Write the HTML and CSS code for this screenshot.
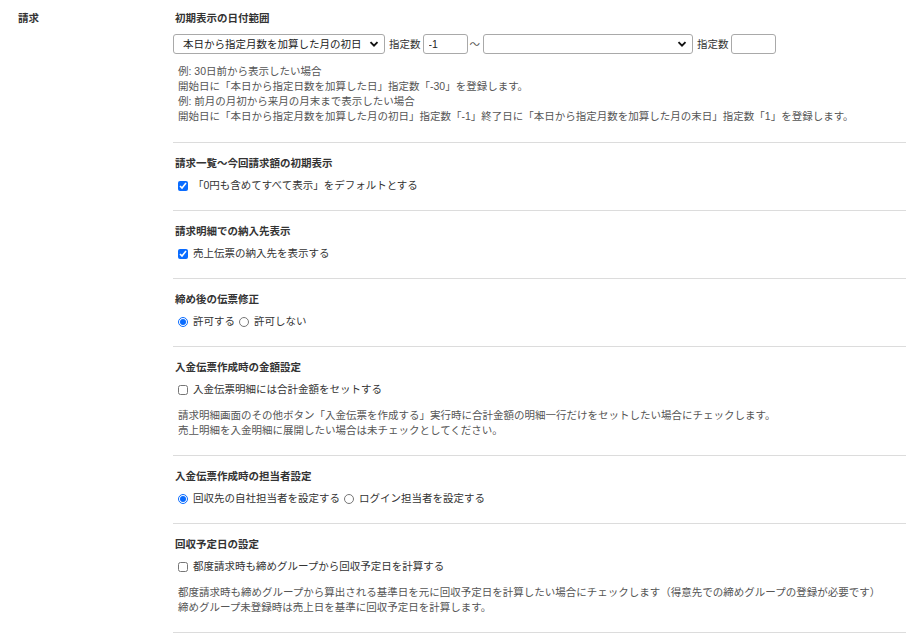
FILE: index.html
```html
<!doctype html>
<html>
<head>
	<meta charset="utf-8" />
	<title>請求 設定</title>
	<link rel="stylesheet" href="styles.css">
</head>
<body>
	<div class="setting">
		<div class="group-label">請求</div>

		<div class="group-body">
			<div class="item">
				<div class="item-title">初期表示の日付範囲</div>
				<div class="range-row">
					<span class="select-wrap wide">
						<select class="select">
							<option>本日から指定月数を加算した月の初日</option>
						</select>
						<svg class="chevron" viewBox="0 0 10 10" width="10" height="10"><path d="M1.5 3.2 L5 6.7 L8.5 3.2" fill="none" stroke="#111" stroke-width="1.9"/></svg>
					</span>
					<span class="unit">指定数</span>
					<input class="num" type="text" value="-1">
					<span class="tilde">〜</span>
					<span class="select-wrap wide2">
						<select class="select">
							<option></option>
						</select>
						<svg class="chevron" viewBox="0 0 10 10" width="10" height="10"><path d="M1.5 3.2 L5 6.7 L8.5 3.2" fill="none" stroke="#111" stroke-width="1.9"/></svg>
					</span>
					<span class="unit">指定数</span>
					<input class="num" type="text" value="">
				</div>
				<div class="help">
					例: 30日前から表示したい場合<br>
					開始日に「本日から指定日数を加算した日」指定数「-30」を登録します。<br>
					例: 前月の月初から来月の月末まで表示したい場合<br>
					開始日に「本日から指定月数を加算した月の初日」指定数「-1」終了日に「本日から指定月数を加算した月の末日」指定数「1」を登録します。
				</div>
			</div>

			<div class="item">
				<div class="item-title">請求一覧〜今回請求額の初期表示</div>
				<label class="opt"><input type="checkbox" checked>「0円も含めてすべて表示」をデフォルトとする</label>
			</div>

			<div class="item">
				<div class="item-title">請求明細での納入先表示</div>
				<label class="opt"><input type="checkbox" checked>売上伝票の納入先を表示する</label>
			</div>

			<div class="item">
				<div class="item-title">締め後の伝票修正</div>
				<div class="opts">
					<label class="opt"><input type="radio" name="fix" checked>許可する</label>
					<label class="opt"><input type="radio" name="fix">許可しない</label>
				</div>
			</div>

			<div class="item">
				<div class="item-title">入金伝票作成時の金額設定</div>
				<label class="opt"><input type="checkbox">入金伝票明細には合計金額をセットする</label>
				<div class="help spaced">
					請求明細画面のその他ボタン「入金伝票を作成する」実行時に合計金額の明細一行だけをセットしたい場合にチェックします。<br>
					売上明細を入金明細に展開したい場合は未チェックとしてください。
				</div>
			</div>

			<div class="item">
				<div class="item-title">入金伝票作成時の担当者設定</div>
				<div class="opts">
					<label class="opt"><input type="radio" name="staff" checked>回収先の自社担当者を設定する</label>
					<label class="opt"><input type="radio" name="staff">ログイン担当者を設定する</label>
				</div>
			</div>

			<div class="item">
				<div class="item-title">回収予定日の設定</div>
				<label class="opt"><input type="checkbox">都度請求時も締めグループから回収予定日を計算する</label>
				<div class="help spaced">
					都度請求時も締めグループから算出される基準日を元に回収予定日を計算したい場合にチェックします（得意先での締めグループの登録が必要です）<br>
					締めグループ未登録時は売上日を基準に回収予定日を計算します。
				</div>
			</div>
		</div>
	</div>
</body>
</html>
```

FILE: styles.css
```css
body {
	margin: 0;
	font-family: "Liberation Sans", "Noto Sans CJK JP", sans-serif;
	font-size: 10.5px;
	line-height: 15px;
	color: #333;
	background: #fff;
}

.setting {
	display: flex;
	padding-top: 11px;
}

.group-label {
	width: 155px;
	padding-left: 18px;
	font-weight: bold;
	flex-shrink: 0;
}

.group-body {
	flex: 1;
}

.item {
	padding: 13px 0 17px;
	border-bottom: 1px solid #dcdcdc;
}

.item:first-child {
	padding-top: 0;
	padding-bottom: 18px;
}

.item-title {
	font-weight: bold;
	padding-left: 2px;
	margin-bottom: 7px;
}

.item:first-child .item-title {
	margin-bottom: 8px;
}

.range-row {
	display: flex;
	align-items: center;
	height: 20px;
}

.select-wrap {
	position: relative;
	display: inline-block;
	height: 20px;
}

.select-wrap.wide {
	width: 212px;
}

.select-wrap.wide2 {
	width: 210px;
}

.select {
	appearance: none;
	-webkit-appearance: none;
	width: 100%;
	height: 20px;
	box-sizing: border-box;
	border: 1px solid #a9a9a9;
	border-radius: 3px;
	background: #fff;
	font-family: inherit;
	font-size: 10.5px;
	color: #222;
	padding: 0 0 0 9px;
	margin: 0;
}

.chevron {
	position: absolute;
	right: 6px;
	top: 5px;
	pointer-events: none;
}

.unit {
	margin: 0 2px 0 4px;
	color: #333;
}

.num {
	width: 45px;
	height: 20px;
	box-sizing: border-box;
	border: 1px solid #a9a9a9;
	border-radius: 3px;
	padding: 0 5px;
	font-family: inherit;
	font-size: 10.5px;
	color: #222;
	margin: 0;
}

.tilde {
	margin: 0 3px 0 2px;
	color: #555;
}

.help {
	margin-top: 10px;
	padding-left: 5px;
	color: #555;
}

.help.spaced {
	margin-top: 11px;
}

.opts {
	display: flex;
	gap: 4px;
}

.opt {
	display: flex;
	align-items: center;
	color: #333;
	padding-left: 5px;
}

.opts .opt + .opt {
	padding-left: 0;
}

.opt input {
	width: 10px;
	height: 10px;
	margin: 0 5px 0 0;
	accent-color: #0a6cff;
}
```
